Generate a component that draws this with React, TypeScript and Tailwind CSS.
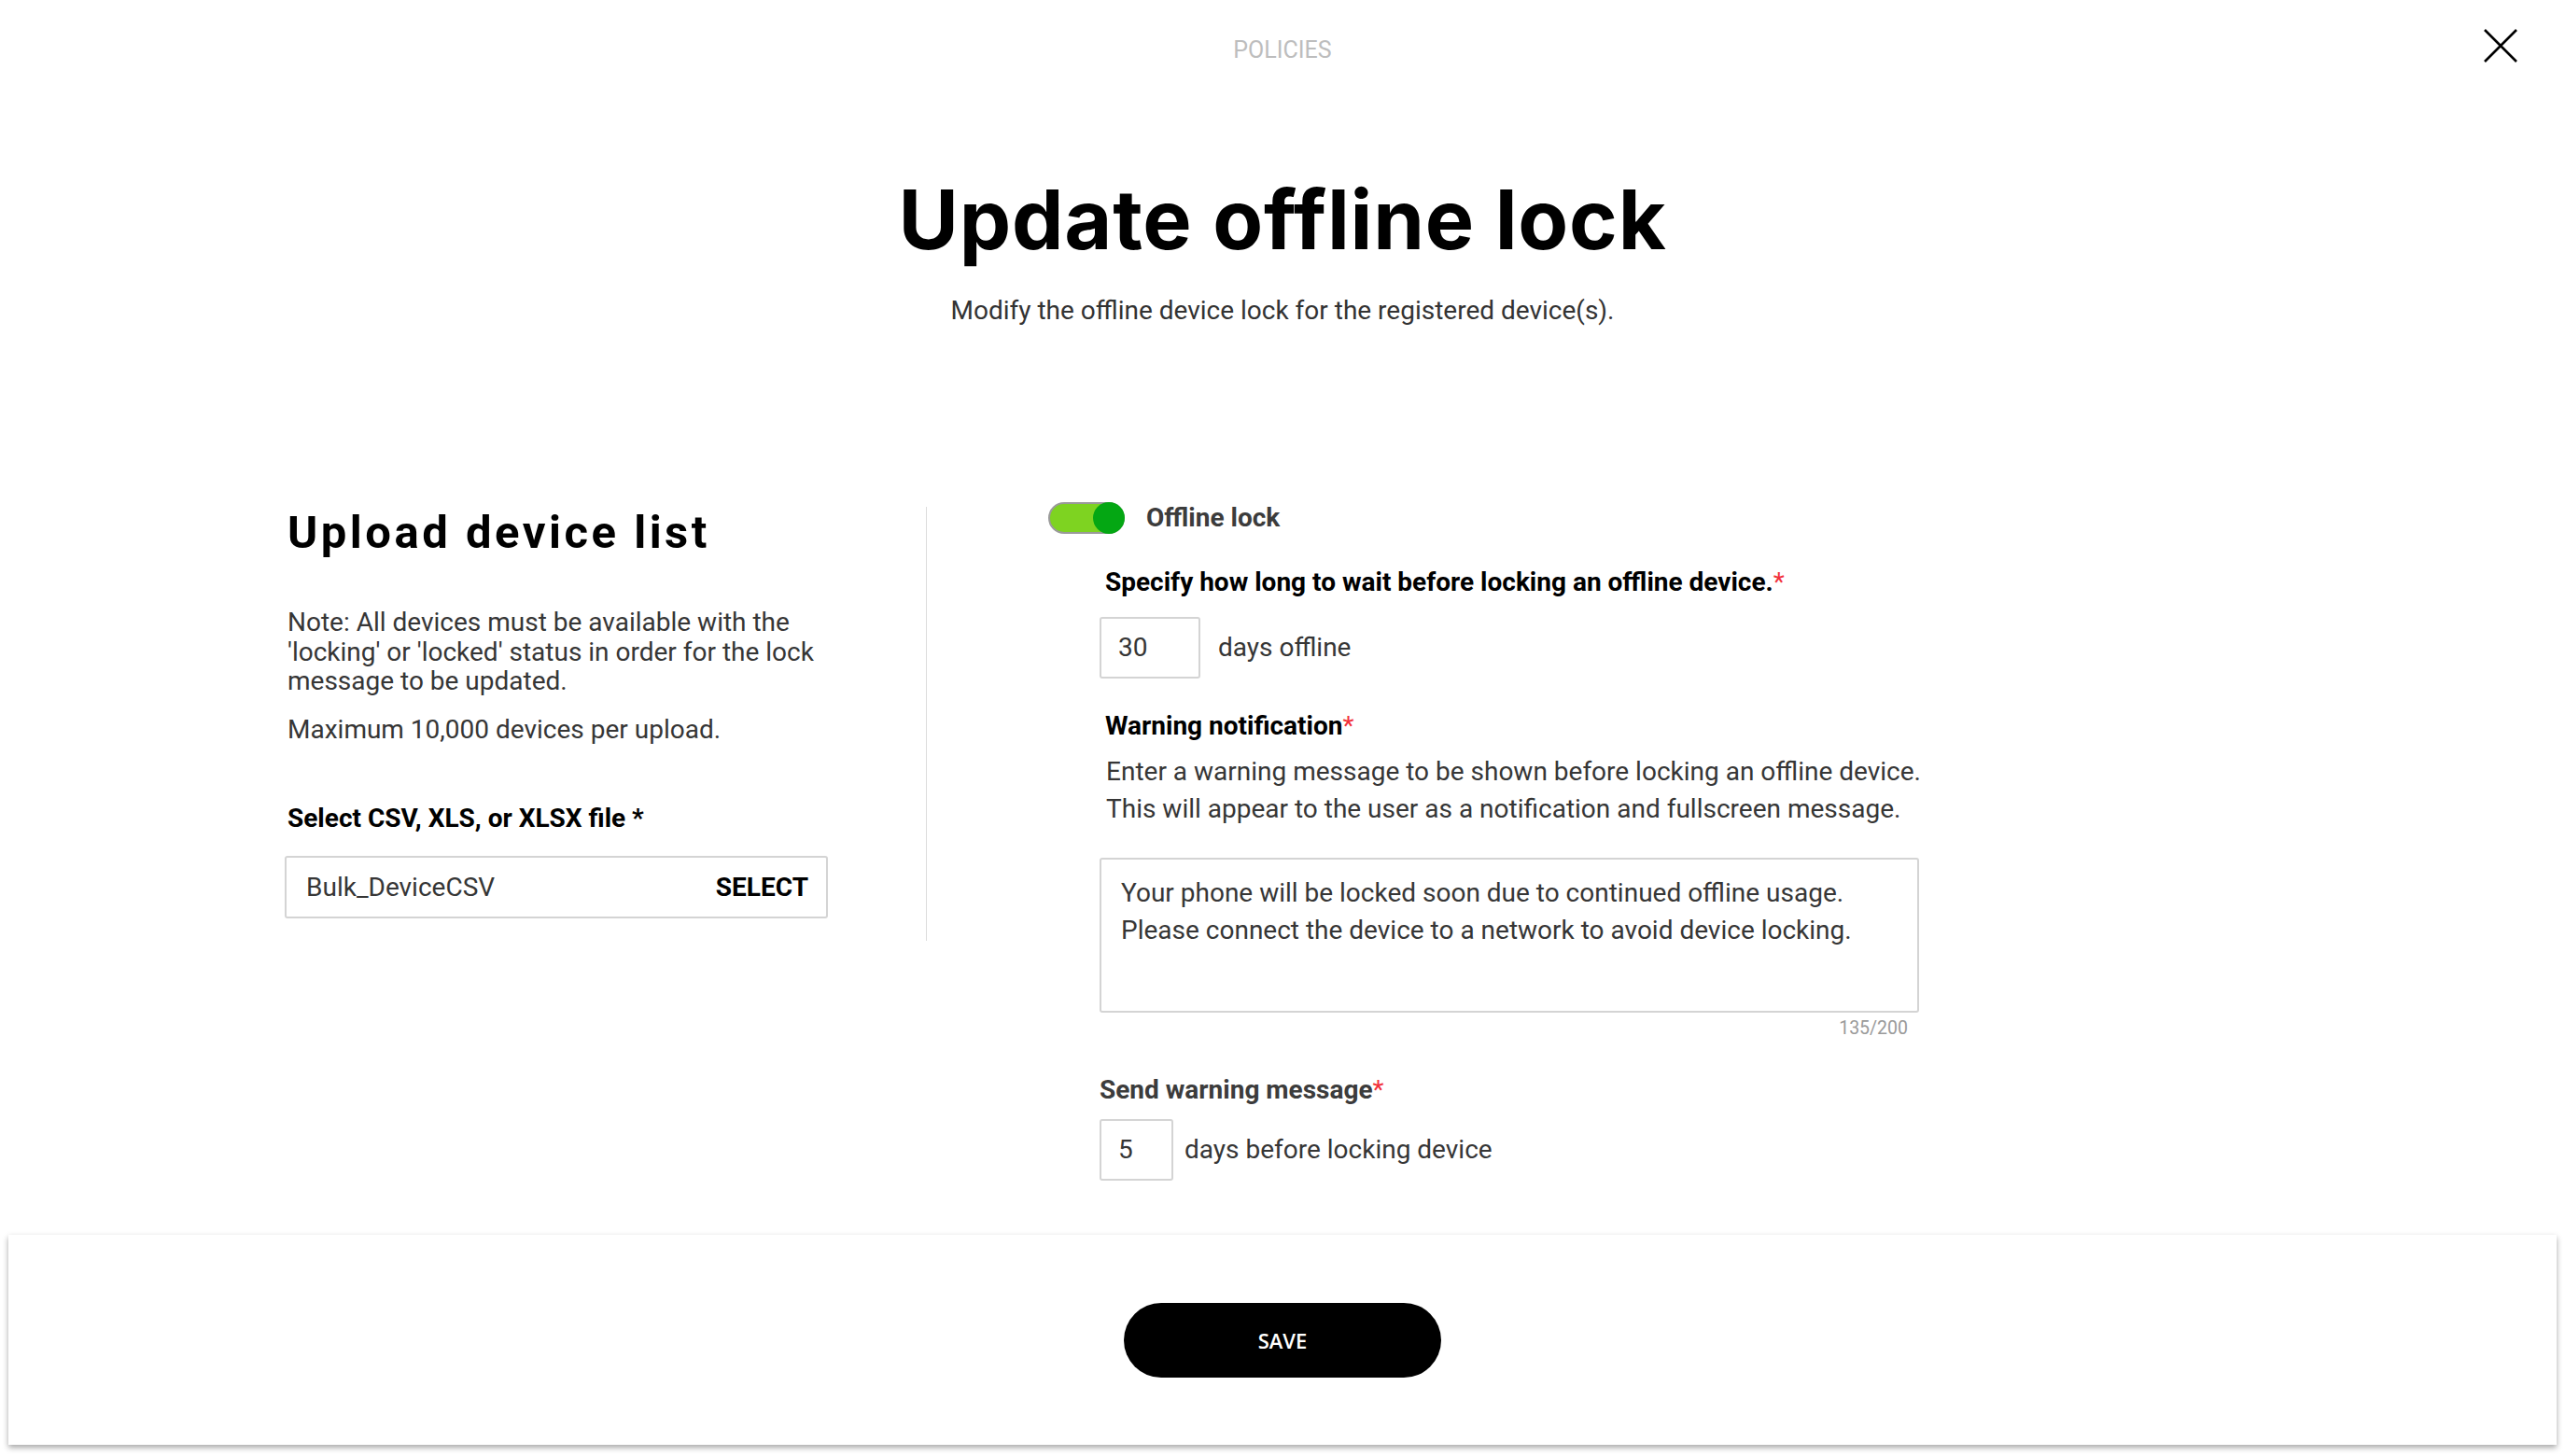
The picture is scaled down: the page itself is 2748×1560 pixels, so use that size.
import { useState } from "react";

function CloseIcon() {
  return (
    <svg width="36" height="36" viewBox="0 0 36 36" fill="none">
      <path d="M1 1L35 35M35 1L1 35" stroke="#000" strokeWidth="2.6" />
    </svg>
  );
}

function Toggle({ on }: { on: boolean }) {
  return (
    <div
      className={
        "relative h-[34px] w-[82px] rounded-full border-2 border-[#9a9a9a] " +
        (on ? "bg-[#7ed321]" : "bg-[#d6d6d6]")
      }
    >
      <div
        className={
          "absolute -top-[2px] h-[34px] w-[34px] rounded-full " +
          (on ? "-right-[2px] bg-[#04a713]" : "-left-[2px] bg-white")
        }
      />
    </div>
  );
}

function Required() {
  return <span className="font-normal text-[#f2323b]">*</span>;
}

export default function App() {
  const [offlineLock] = useState(true);
  const message =
    "Your phone will be locked soon due to continued offline usage.\nPlease connect the device to a network to avoid device locking.";

  return (
    <div className="relative flex h-[1560px] w-[2748px] flex-col bg-white font-['Roboto',sans-serif] text-[#363636]">
      <button className="absolute right-[51px] top-[31px]">
        <CloseIcon />
      </button>

      <header className="flex flex-col items-center pt-[38px]">
        <div className="text-[25px] leading-[32px] text-[#bdbdbd]">POLICIES</div>
        <h1 className="mt-[115px] font-['Inter',sans-serif] text-[88px] font-bold leading-[100px] tracking-[0.8px] text-black">
          Update offline lock
        </h1>
        <p className="mt-[30px] text-[28px] leading-[36px] text-[#333]">
          Modify the offline device lock for the registered device(s).
        </p>
      </header>

      <main className="mt-[187px] flex items-start pl-[308px]">
        <section className="mt-[5px] h-[465px] w-[685px] border-r border-[#dcdcdc]">
          <h2 className="text-[49px] font-bold leading-[56px] tracking-[3.5px] text-black">
            Upload device list
          </h2>
          <p className="mt-[52px] text-[28px] leading-[31.5px]">
            Note: All devices must be available with the
            <br />
            'locking' or 'locked' status in order for the lock
            <br />
            message to be updated.
          </p>
          <p className="mt-[20px] text-[28px] leading-[31.5px]">Maximum 10,000 devices per upload.</p>
          <div className="mt-[64px] text-[28px] font-bold leading-[32px] text-black">
            Select CSV, XLS, or XLSX file *
          </div>
          <div className="-ml-[3px] mt-[24px] flex h-[67px] w-[582px] items-center justify-between rounded-[3px] border-2 border-[#d4d4d4] pl-[21px] pr-[19px]">
            <span className="text-[28px]">Bulk_DeviceCSV</span>
            <span className="text-[28px] font-bold text-black">SELECT</span>
          </div>
        </section>

        <section className="ml-[130px] flex flex-col">
          <div className="flex h-[34px] items-center">
            <Toggle on={offlineLock} />
            <span className="ml-[23px] text-[28px] font-bold text-[#3c3c3c]">Offline lock</span>
          </div>

          <div className="ml-[55px] flex flex-col">
            <div className="mt-[36px] pl-[6px] text-[28px] font-bold leading-[32px] text-black">
              Specify how long to wait before locking an offline device.
              <Required />
            </div>
            <div className="mt-[21px] flex items-center">
              <div className="flex h-[66px] w-[108px] items-center rounded-[3px] border-2 border-[#d4d4d4] pl-[18px] text-[28px]">
                30
              </div>
              <span className="ml-[19px] text-[28px]">days offline</span>
            </div>

            <div className="mt-[35px] pl-[6px] text-[28px] font-bold leading-[32px] text-black">
              Warning notification
              <Required />
            </div>
            <p className="mt-[13px] pl-[7px] text-[28px] leading-[40px]">
              Enter a warning message to be shown before locking an offline device.
              <br />
              This will appear to the user as a notification and fullscreen message.
            </p>

            <div className="mt-[32px] h-[166px] w-[878px] whitespace-pre-line rounded-[3px] border-2 border-[#d4d4d4] pl-[21px] pt-[16px] text-[28px] leading-[40px]">
              {message}
            </div>
            <div className="mt-[5px] w-[878px] pr-[12px] text-right text-[19.5px] leading-[24px] text-[#9a9a9a]">
              135/200
            </div>

            <div className="mt-[38px] text-[28px] font-bold leading-[32px] text-[#3c3c3c]">
              Send warning message
              <Required />
            </div>
            <div className="mt-[15px] flex items-center">
              <div className="flex h-[66px] w-[79px] items-center rounded-[3px] border-2 border-[#d4d4d4] pl-[18px] text-[28px]">
                5
              </div>
              <span className="ml-[12px] text-[28px]">days before locking device</span>
            </div>
          </div>
        </section>
      </main>

      <footer className="mx-[9px] mt-[58px] flex h-[225px] justify-center bg-white pt-[73px] shadow-[0_3px_6px_rgba(0,0,0,0.35)]">
        <button className="h-[80px] w-[340px] rounded-full bg-black font-['Open_Sans',sans-serif] text-[22px] font-semibold text-white">
          SAVE
        </button>
      </footer>
    </div>
  );
}
